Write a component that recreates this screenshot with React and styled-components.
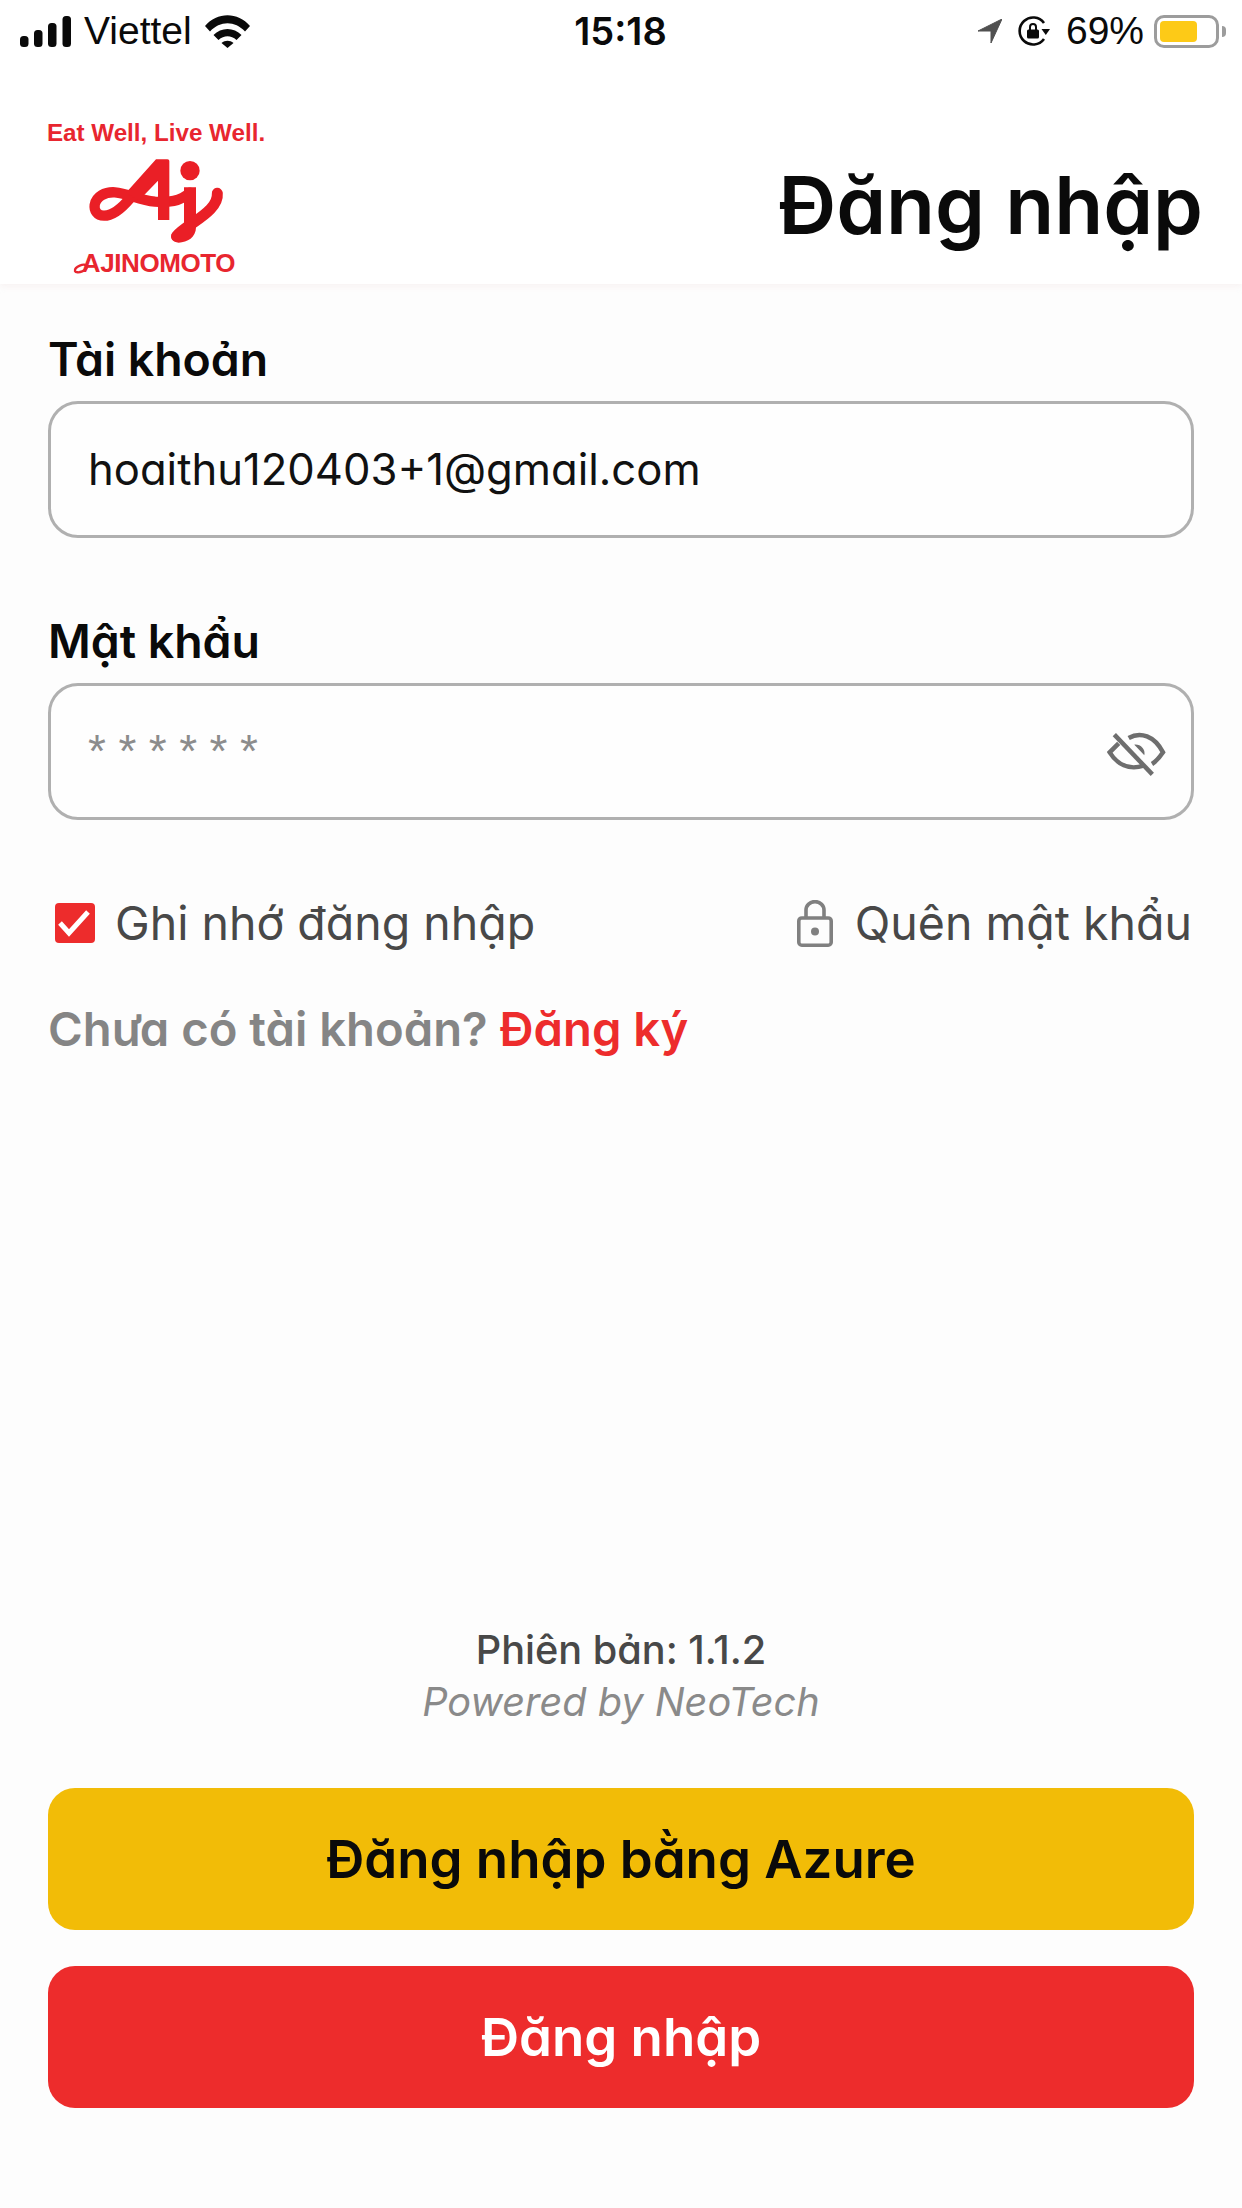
import React from "react";
import styled, { createGlobalStyle } from "styled-components";

const Global = createGlobalStyle`
  html, body { margin: 0; padding: 0; background: #fdfdfd; }
  * { box-sizing: border-box; }
  body { font-family: Inter, "Noto Sans", sans-serif; font-feature-settings: "cv11" 1; }
`;

const Page = styled.div`
  width: 1242px;
  height: 2208px;
  display: flex;
  flex-direction: column;
  background: #fdfdfd;
  overflow: hidden;
`;

const TopArea = styled.header`
  height: 284px;
  background: #fff;
  box-shadow: 0 3px 6px rgba(240, 225, 225, 0.35);
  display: flex;
  flex-direction: column;
`;

const StatusBar = styled.div`
  height: 60px;
  padding: 2px 15px 0 20px;
  display: grid;
  grid-template-columns: 1fr auto 1fr;
  align-items: center;
  font-family: "Liberation Sans", Arial, sans-serif;
  font-size: 39px;
  color: #0a0a0a;
`;

const StatusLeft = styled.div`
  display: flex;
  align-items: center;
  gap: 13px;
`;

const StatusRight = styled.div`
  display: flex;
  align-items: center;
  justify-content: flex-end;
  gap: 16px;
`;

const Clock = styled.div`
  font-family: Inter, sans-serif;
  font-size: 38px;
  font-weight: 600;
  margin-left: -6px;
`;

const Battery = styled.div`
  position: relative;
  width: 65px;
  height: 33px;
  border: 3px solid #9c9c9c;
  border-radius: 10px;
  padding: 3px;
  margin-left: -6px;
  margin-right: 8px;
  &::after {
    content: "";
    position: absolute;
    right: -10px;
    top: 8px;
    width: 4px;
    height: 11px;
    border-radius: 0 5px 5px 0;
    background: #9c9c9c;
  }
`;

const BatteryFill = styled.div`
  height: 100%;
  border-radius: 4px;
  background: #fdca17;
`;

const Brand = styled.div`
  flex: 1;
  display: flex;
  align-items: flex-start;
  justify-content: space-between;
  padding: 0 39px 0 47px;
`;

const Logo = styled.div`
  width: 218px;
  margin-top: 61px;
  display: flex;
  flex-direction: column;
  align-items: center;
  color: #e8262f;
  font-family: "Liberation Sans", Arial, sans-serif;
  font-weight: 700;
`;

const Tagline = styled.div`
  font-size: 24.2px;
  line-height: 24px;
  white-space: nowrap;
`;

const Mark = styled.svg`
  display: block;
  width: 150px;
  height: 100px;
  margin: 5px 0 0 -2px;
`;

const LogoName = styled.div`
  position: relative;
  font-size: 26px;
  line-height: 26px;
  letter-spacing: -0.4px;
  margin-left: 5px;
  white-space: nowrap;
`;

const Swash = styled.svg`
  position: absolute;
  left: -9px;
  top: 10px;
  width: 22px;
  height: 14px;
`;

const Title = styled.h1`
  margin: 95px 0 0;
  font-size: 80px;
  line-height: 100px;
  font-weight: 600;
  color: #0a0a0a;
`;

const Form = styled.main`
  flex: 1;
  display: flex;
  flex-direction: column;
  padding: 45px 48px 100px;
`;

const Field = styled.div`
  display: flex;
  flex-direction: column;
  gap: 12px;
  margin-bottom: 73px;
`;

const Label = styled.label`
  font-size: 46.4px;
  line-height: 60px;
  font-weight: 600;
  color: #0a0a0a;
`;

const InputBox = styled.div`
  height: 137px;
  border: 3px solid #b0b0b0;
  border-radius: 30px;
  padding: 0 24px 0 37px;
  display: flex;
  align-items: center;
  justify-content: space-between;
  background: #fefefe;
`;

const InputValue = styled.span`
  font-size: 43.6px;
  color: #111;
`;

const Masked = styled.span`
  font-family: "Liberation Sans", Arial, sans-serif;
  font-size: 46px;
  letter-spacing: 12.5px;
  color: #8c8c8c;
  margin-top: -2px;
`;

const Options = styled.div`
  display: flex;
  align-items: center;
  justify-content: space-between;
  padding: 0 2px 0 7px;
  font-size: 46.5px;
  line-height: 60px;
  color: #484848;
`;

const OptionGroup = styled.div`
  display: flex;
  align-items: center;
  gap: ${(p) => p.$gap}px;
`;

const Checkbox = styled.span`
  width: 40px;
  height: 40px;
  border-radius: 4px;
  background: #ed2c2c;
  display: flex;
  align-items: center;
  justify-content: center;
`;

const SignupLine = styled.p`
  margin: 46px 0 0;
  font-size: 47.2px;
  line-height: 60px;
  font-weight: 600;
  color: #858585;
`;

const SignupLink = styled.a`
  color: #ed2c2c;
`;

const Version = styled.div`
  margin-top: auto;
  text-align: center;
  font-size: 39.7px;
  line-height: 52px;
  font-weight: 500;
  color: #484848;
`;

const Powered = styled.div`
  text-align: center;
  font-size: 39.7px;
  line-height: 52px;
  font-style: italic;
  color: #8a8a8a;
  margin-bottom: 60px;
`;

const Button = styled.button`
  display: block;
  width: 100%;
  height: 142px;
  border: 0;
  border-radius: 27px;
  background: ${(p) => p.$bg};
  color: ${(p) => p.$fg};
  font-family: inherit;
  font-feature-settings: inherit;
  font-size: 52.8px;
  font-weight: 600;
  & + & { margin-top: 36px; }
`;

const Signal = () => (
  <svg width="51" height="31" viewBox="0 0 51 31">
    <rect x="0" y="20" width="8.5" height="11" rx="3.5" fill="#0a0a0a" />
    <rect x="14" y="14" width="8.5" height="17" rx="3.5" fill="#0a0a0a" />
    <rect x="28" y="7" width="8.5" height="24" rx="3.5" fill="#0a0a0a" />
    <rect x="42.5" y="0" width="8.5" height="31" rx="3.5" fill="#0a0a0a" />
  </svg>
);

const Wifi = () => (
  <svg width="45" height="33" viewBox="0 0 45 33">
    <path d="M0 11 C12 -3.5 33 -3.5 45 11 L40 16.5 C30 5.5 15 5.5 5 16.5 Z" fill="#0a0a0a" />
    <path d="M8.5 20 C16 12 29 12 36.5 20 L31.5 25 C26 20 19 20 13.5 25 Z" fill="#0a0a0a" />
    <path d="M16.5 28 C20 25 25 25 28.5 28 L22.5 33 Z" fill="#0a0a0a" />
  </svg>
);

const LocationArrow = () => (
  <svg width="24" height="24" viewBox="0 0 24 24">
    <path d="M24 0 L0 12 L13 12 L13 24 Z" fill="#505050" stroke="#505050" strokeWidth="1" strokeLinejoin="round" />
  </svg>
);

const RotationLock = () => (
  <svg width="32" height="32" viewBox="0 0 32 32">
    <path d="M26 8 A13.5 13.5 0 1 0 26 24" fill="none" stroke="#0a0a0a" strokeWidth="2.6" />
    <path d="M23.5 14 L32 14 L27.8 20 Z" fill="#0a0a0a" />
    <rect x="9" y="14.5" width="12" height="9" rx="1.5" fill="#0a0a0a" />
    <path d="M12 15 V12 A3 3 0 0 1 18 12 V15" fill="none" stroke="#0a0a0a" strokeWidth="2" />
  </svg>
);

const AjMark = () => (
  <Mark viewBox="0 0 450 300">
    <g fill="none" stroke="#ea1f26" strokeLinecap="round" strokeLinejoin="round">
      <path d="M150 145 C125 175 100 197 72 197 C50 197 42 180 44 165 C48 140 75 125 105 127 C145 130 175 150 225 155 C265 158 300 155 330 128" strokeWidth="31" />
      <path d="M412 130 C415 165 378 192 342 217 C320 232 300 245 290 258" strokeWidth="33" />
    </g>
    <path d="M228 28 H262 C266 28 268 30 268 34 V210 H234 V92 L176 152 L138 128 Z" fill="#ea1f26" />
    <path d="M312 112 H348 V232 C348 262 322 278 296 278 C278 278 268 264 276 250 L312 222 Z" fill="#ea1f26" />
    <circle cx="330" cy="62" r="29" fill="#ea1f26" />
  </Mark>
);

const EyeOff = () => (
  <svg width="60" height="50" viewBox="40 19 180 150">
    <g fill="none" stroke="#6e6e6e" strokeWidth="13.5">
      <path d="M62 42 L176 161" />
      <path d="M105 52 C140 32 182 45 208 95 C198 110 188 122 175 130" />
      <path d="M75 68 L48 95 C70 130 105 150 150 135" />
    </g>
    <path d="M122 72 C140 70 156 85 152 104 Z" fill="#6e6e6e" />
  </svg>
);

const LockIcon = () => (
  <svg width="36" height="47" viewBox="0 0 36 47">
    <rect x="1.8" y="18" width="32.4" height="27.2" rx="3" fill="none" stroke="#808080" strokeWidth="3.6" />
    <path d="M9 18 V10 A9 8.4 0 0 1 27 10 V18" fill="none" stroke="#808080" strokeWidth="3.6" />
    <circle cx="18" cy="31.5" r="4" fill="#808080" />
  </svg>
);

export default function App() {
  return (
    <Page>
      <Global />
      <TopArea>
        <StatusBar>
          <StatusLeft>
            <Signal />
            <span>Viettel</span>
            <Wifi />
          </StatusLeft>
          <Clock>15:18</Clock>
          <StatusRight>
            <LocationArrow />
            <RotationLock />
            <span>69%</span>
            <Battery><BatteryFill style={{ width: "69%" }} /></Battery>
          </StatusRight>
        </StatusBar>
        <Brand>
          <Logo>
            <Tagline>Eat Well, Live Well.</Tagline>
            <AjMark />
            <LogoName>
              <Swash viewBox="0 0 22 14">
                <ellipse cx="8" cy="8.5" rx="6.5" ry="3.2" transform="rotate(-22 8 8.5)" fill="none" stroke="#e8262f" strokeWidth="2.4" />
              </Swash>
              AJINOMOTO
            </LogoName>
          </Logo>
          <Title>Đăng nhập</Title>
        </Brand>
      </TopArea>
      <Form>
        <Field>
          <Label>Tài khoản</Label>
          <InputBox><InputValue>hoaithu120403+1@gmail.com</InputValue></InputBox>
        </Field>
        <Field>
          <Label>Mật khẩu</Label>
          <InputBox><Masked>******</Masked><EyeOff /></InputBox>
        </Field>
        <Options>
          <OptionGroup $gap={20}>
            <Checkbox>
              <svg width="40" height="40" viewBox="0 0 40 40">
                <path d="M5 20 L14 30 L33 9" fill="none" stroke="#fff" strokeWidth="5" />
              </svg>
            </Checkbox>
            <span>Ghi nhớ đăng nhập</span>
          </OptionGroup>
          <OptionGroup $gap={22}>
            <LockIcon />
            <span>Quên mật khẩu</span>
          </OptionGroup>
        </Options>
        <SignupLine>Chưa có tài khoản? <SignupLink>Đăng ký</SignupLink></SignupLine>
        <Version>Phiên bản: 1.1.2</Version>
        <Powered>Powered by NeoTech</Powered>
        <Button $bg="#f2bc07" $fg="#0a0a0a">Đăng nhập bằng Azure</Button>
        <Button $bg="#ed2c2c" $fg="#fff">Đăng nhập</Button>
      </Form>
    </Page>
  );
}
